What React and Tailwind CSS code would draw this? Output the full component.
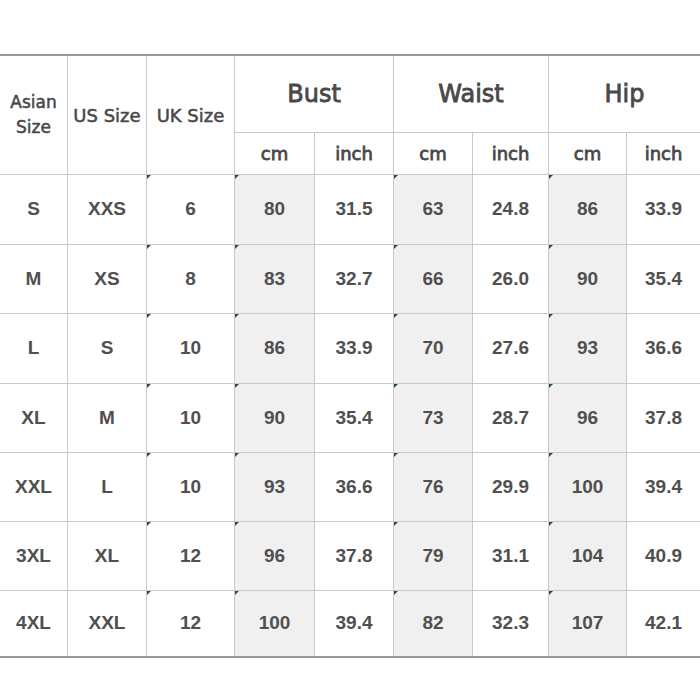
import React from "react";

const rows = [
  ["S", "XXS", "6", "80", "31.5", "63", "24.8", "86", "33.9"],
  ["M", "XS", "8", "83", "32.7", "66", "26.0", "90", "35.4"],
  ["L", "S", "10", "86", "33.9", "70", "27.6", "93", "36.6"],
  ["XL", "M", "10", "90", "35.4", "73", "28.7", "96", "37.8"],
  ["XXL", "L", "10", "93", "36.6", "76", "29.9", "100", "39.4"],
  ["3XL", "XL", "12", "96", "37.8", "79", "31.1", "104", "40.9"],
  ["4XL", "XXL", "12", "100", "39.4", "82", "32.3", "107", "42.1"],
];

function Mark() {
  return (
    <span className="absolute left-0 top-0 w-0 h-0 border-t-[4px] border-r-[4px] border-t-[#1e5a1e] border-r-transparent" />
  );
}

const head = "font-['DejaVu_Sans','Comic_Sans_MS',sans-serif] border-[#c9c9c9] flex items-center justify-center text-center text-[#484848]";
const big = "text-[24px] [-webkit-text-stroke:0.8px_#484848]";
const small = "[-webkit-text-stroke:0.5px_#484848]";
const unit = "text-[18px] [-webkit-text-stroke:0.8px_#484848]";

export default function App() {
  return (
    <div className="w-[700px] h-[700px] bg-white overflow-hidden">
      <div className="mt-[54px] border-t-2 border-b-2 border-[#9a9a9a]">
        <div className="grid grid-cols-[68px_79px_88px_80px_79px_79px_76px_78px_73px] grid-rows-[77px_42px_70px_69px_70px_69px_69px_69px_65px] text-[#505050]">
          <div className={`${head} ${small} row-span-2 border-r border-b text-[17px] leading-[25px]`}>
            Asian
            <br />
            Size
          </div>
          <div className={`${head} ${small} row-span-2 border-r border-b text-[18px]`}>US Size</div>
          <div className={`${head} ${small} row-span-2 border-r border-b text-[18px]`}>UK Size</div>
          <div className={`${head} ${big} col-span-2 border-r border-b`}>Bust</div>
          <div className={`${head} ${big} col-span-2 border-r border-b`}>Waist</div>
          <div className={`${head} ${big} col-span-2 border-b`}>Hip</div>
          <div className={`${head} ${unit} border-r border-b`}>cm</div>
          <div className={`${head} ${unit} border-r border-b`}>inch</div>
          <div className={`${head} ${unit} border-r border-b`}>cm</div>
          <div className={`${head} ${unit} border-r border-b`}>inch</div>
          <div className={`${head} ${unit} border-r border-b`}>cm</div>
          <div className={`${head} ${unit} border-b`}>inch</div>
          {rows.map((r, ri) =>
            r.map((v, ci) => {
              const grey = ci === 3 || ci === 5 || ci === 7;
              const mark = ci === 2 || grey;
              const last = ri === rows.length - 1;
              return (
                <div
                  key={`${ri}-${ci}`}
                  className={`relative flex items-center justify-center font-['Liberation_Sans',Arial,sans-serif] text-[19px] font-bold border-[#c9c9c9] ${
                    ci < 8 ? "border-r" : ""
                  } ${last ? "" : "border-b"} ${grey ? "bg-[#f0f0f0]" : "bg-white"}`}
                >
                  {mark && <Mark />}
                  {v}
                </div>
              );
            })
          )}
        </div>
      </div>
    </div>
  );
}
